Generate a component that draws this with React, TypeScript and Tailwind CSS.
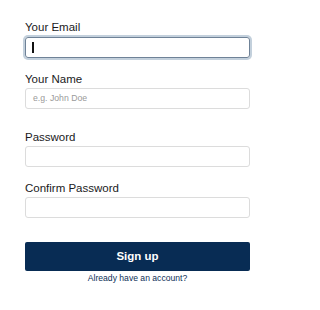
import React from 'react';

function Field({
  label,
  placeholder,
  focused,
  className,
}: {
  label: string;
  placeholder?: string;
  focused?: boolean;
  className?: string;
}) {
  return (
    <div className={className}>
      <div className="text-[11.5px] leading-[15px] text-[#1a1a1c]">{label}</div>
      {focused ? (
        <div className="mt-[2px] flex h-[21px] items-center rounded-[3px] border border-[#6f8297] px-[6px] shadow-[0_0_0_2px_#c3d0dc]">
          <div className="h-[11px] w-[2px] bg-[#111]" />
        </div>
      ) : (
        <div className="mt-[1px] flex h-[21px] items-center rounded-[3px] border border-[#dcdcdc] px-[7px]">
          {placeholder && (
            <span className="text-[8.7px] leading-none text-[#9a9a9a]">{placeholder}</span>
          )}
        </div>
      )}
    </div>
  );
}

export default function App() {
  return (
    <div
      className="min-h-[310px] w-[283px] bg-white"
      style={{ fontFamily: '"Liberation Sans", Arial, sans-serif' }}
    >
      <div className="ml-[25px] flex w-[225px] flex-col pt-[20px]">
        <Field label="Your Email" focused />
        <Field label="Your Name" placeholder="e.g. John Doe" className="mt-[14px]" />
        <Field label="Password" className="mt-[21px]" />
        <Field label="Confirm Password" className="mt-[14px]" />

        <button className="mt-[24px] h-[29px] rounded-[2px] bg-[#082c54] text-[11.5px] font-bold text-white">
          Sign up
        </button>
        <div className="mt-[2px] text-center text-[8.6px] leading-[10px] text-[#0d2f57]">
          Already have an account?
        </div>
      </div>
    </div>
  );
}
